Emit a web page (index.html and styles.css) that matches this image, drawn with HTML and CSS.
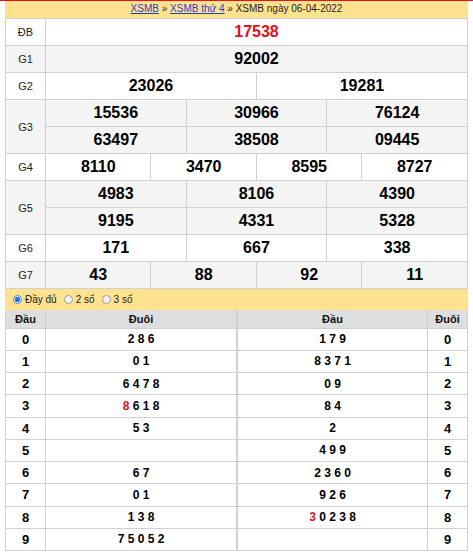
FILE: index.html
```html
<!DOCTYPE html>
<html>
<head>
<meta charset="utf-8">
<link rel="stylesheet" href="styles.css">
</head>
<body>
<div class="topline"></div>
<div class="wrap">
  <div class="crumb"><a href="#">XSMB</a> » <a href="#">XSMB thứ 4</a> » XSMB ngày 06-04-2022</div>
  <table class="kq">
    <colgroup><col class="c-lab"><col span="12"></colgroup>
    <tr class="w"><td class="lab">ĐB</td><td colspan="12" class="db">17538</td></tr>
    <tr class="g"><td class="lab">G1</td><td colspan="12">92002</td></tr>
    <tr class="w"><td class="lab">G2</td><td colspan="6">23026</td><td colspan="6">19281</td></tr>
    <tr class="g"><td class="lab" rowspan="2">G3</td><td colspan="4">15536</td><td colspan="4">30966</td><td colspan="4">76124</td></tr>
    <tr class="g"><td colspan="4">63497</td><td colspan="4">38508</td><td colspan="4">09445</td></tr>
    <tr class="w"><td class="lab">G4</td><td colspan="3">8110</td><td colspan="3">3470</td><td colspan="3">8595</td><td colspan="3">8727</td></tr>
    <tr class="g"><td class="lab" rowspan="2">G5</td><td colspan="4">4983</td><td colspan="4">8106</td><td colspan="4">4390</td></tr>
    <tr class="g"><td colspan="4">9195</td><td colspan="4">4331</td><td colspan="4">5328</td></tr>
    <tr class="w"><td class="lab">G6</td><td colspan="4">171</td><td colspan="4">667</td><td colspan="4">338</td></tr>
    <tr class="g"><td class="lab">G7</td><td colspan="3">43</td><td colspan="3">88</td><td colspan="3">92</td><td colspan="3">11</td></tr>
  </table>
  <div class="opts">
    <label class="opt"><span class="radio on"></span>Đầy đủ</label>
    <label class="opt"><span class="radio"></span>2 số</label>
    <label class="opt"><span class="radio"></span>3 số</label>
  </div>
  <div class="loto">
    <table class="lt lt-left">
      <colgroup><col class="c-lab"><col></colgroup>
      <tr class="hd"><th>Đầu</th><th>Đuôi</th></tr>
      <tr><td class="k">0</td><td>2 8 6</td></tr>
      <tr><td class="k">1</td><td>0 1</td></tr>
      <tr><td class="k">2</td><td>6 4 7 8</td></tr>
      <tr><td class="k">3</td><td><span class="red">8</span> 6 1 8</td></tr>
      <tr><td class="k">4</td><td>5 3</td></tr>
      <tr><td class="k">5</td><td></td></tr>
      <tr><td class="k">6</td><td>6 7</td></tr>
      <tr><td class="k">7</td><td>0 1</td></tr>
      <tr><td class="k">8</td><td>1 3 8</td></tr>
      <tr><td class="k">9</td><td>7 5 0 5 2</td></tr>
    </table>
    <table class="lt lt-right">
      <colgroup><col><col class="c-lab"></colgroup>
      <tr class="hd"><th>Đầu</th><th>Đuôi</th></tr>
      <tr><td>1 7 9</td><td class="k">0</td></tr>
      <tr><td>8 3 7 1</td><td class="k">1</td></tr>
      <tr><td>0 9</td><td class="k">2</td></tr>
      <tr><td>8 4</td><td class="k">3</td></tr>
      <tr><td>2</td><td class="k">4</td></tr>
      <tr><td>4 9 9</td><td class="k">5</td></tr>
      <tr><td>2 3 6 0</td><td class="k">6</td></tr>
      <tr><td>9 2 6</td><td class="k">7</td></tr>
      <tr><td><span class="red">3</span> 0 2 3 8</td><td class="k">8</td></tr>
      <tr><td></td><td class="k">9</td></tr>
    </table>
  </div>
</div>
</body>
</html>
```

FILE: styles.css
```css
html, body {
  margin: 0;
  padding: 0;
  background: #fff;
  font-family: "Liberation Sans", Arial, sans-serif;
  color: #000;
}

.topline {
  height: 1px;
  background: #e8101a;
}

.wrap {
  margin: 0 5px;
  width: 463px;
}

.crumb {
  background: #ffe28f;
  height: 17px;
  line-height: 16px;
  text-align: center;
  font-size: 10px;
  color: #222;
}

.crumb a {
  color: #1f3fbf;
  text-decoration: underline;
}

.kq {
  width: 463px;
  border-collapse: collapse;
  table-layout: fixed;
}

.c-lab {
  width: 40px;
}

.kq tr {
  height: 27px;
}

.kq td {
  border: 1px solid #d0d0d0;
  padding: 0;
  text-align: center;
  font-size: 16px;
  font-weight: bold;
  color: #000;
}

.kq td.lab {
  font-size: 11px;
  font-weight: normal;
  color: #222;
}

.kq td.db {
  color: #e3101e;
}

.kq tr.w td {
  background: #fff;
}

.kq tr.g td {
  background: #f4f4f4;
}

.opts {
  background: #ffe28f;
  height: 21px;
  display: flex;
  align-items: center;
  padding-left: 8px;
  font-size: 10px;
  color: #222;
}

.opt {
  display: inline-flex;
  align-items: center;
  margin-right: 7px;
}

.radio {
  box-sizing: border-box;
  width: 9px;
  height: 9px;
  border: 1px solid #9a9a9a;
  border-radius: 50%;
  background: #f4f4f4;
  margin-right: 3px;
}

.radio.on {
  border-color: #4a86d8;
  background: radial-gradient(circle, #1d6fe0 0 2.2px, #e8f0fb 2.8px);
}

.loto {
  display: flex;
}

.lt {
  border-collapse: collapse;
  table-layout: fixed;
}

.lt-left {
  width: 232px;
}

.lt-right {
  width: 231px;
}

.lt tr {
  height: 22.25px;
}

.lt tr.hd {
  height: 18px;
}

.lt th {
  background: #dedede;
  border: 1px solid #d0d0d0;
  border-top: none;
  font-size: 11px;
  font-weight: bold;
  padding: 0;
  color: #111;
}

.lt td {
  border: 1px solid #d0d0d0;
  padding: 0;
  text-align: center;
  font-size: 12px;
  font-weight: bold;
  color: #000;
  background: #fff;
}

.lt td.k {
  font-size: 13px;
}

.red {
  color: #e3101e;
}
```
